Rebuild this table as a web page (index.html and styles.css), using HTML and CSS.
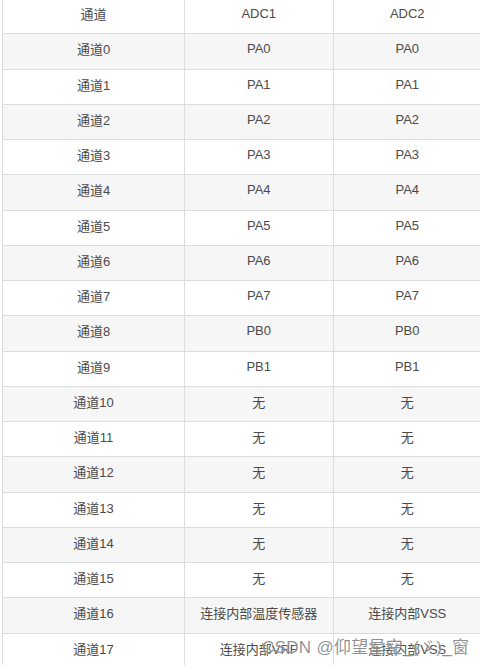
FILE: index.html
```html
<!DOCTYPE html>
<html lang="zh">
<head>
<meta charset="utf-8">
<title>ADC通道</title>
<link rel="stylesheet" href="styles.css">
</head>
<body>
<div class="wrap">
<table class="tbl">
<colgroup><col class="c1"><col class="c2"><col class="c3"></colgroup>
<thead>
<tr><th>通道</th><th>ADC1</th><th>ADC2</th></tr>
</thead>
<tbody>
<tr><td>通道0</td><td>PA0</td><td>PA0</td></tr>
<tr><td>通道1</td><td>PA1</td><td>PA1</td></tr>
<tr><td>通道2</td><td>PA2</td><td>PA2</td></tr>
<tr><td>通道3</td><td>PA3</td><td>PA3</td></tr>
<tr><td>通道4</td><td>PA4</td><td>PA4</td></tr>
<tr><td>通道5</td><td>PA5</td><td>PA5</td></tr>
<tr><td>通道6</td><td>PA6</td><td>PA6</td></tr>
<tr><td>通道7</td><td>PA7</td><td>PA7</td></tr>
<tr><td>通道8</td><td>PB0</td><td>PB0</td></tr>
<tr><td>通道9</td><td>PB1</td><td>PB1</td></tr>
<tr><td>通道10</td><td>无</td><td>无</td></tr>
<tr><td>通道11</td><td>无</td><td>无</td></tr>
<tr><td>通道12</td><td>无</td><td>无</td></tr>
<tr><td>通道13</td><td>无</td><td>无</td></tr>
<tr><td>通道14</td><td>无</td><td>无</td></tr>
<tr><td>通道15</td><td>无</td><td>无</td></tr>
<tr><td>通道16</td><td>连接内部温度传感器</td><td>连接内部VSS</td></tr>
<tr><td>通道17</td><td>连接内部VRF</td><td>连接内部VSS</td></tr>
</tbody>
</table>
<div class="watermark">CSDN @仰望星空_(ゞ)_窗</div>
</div>
</body>
</html>
```

FILE: styles.css
```css
html, body {
  margin: 0;
  padding: 0;
  background: #fff;
  overflow: hidden;
}
.wrap {
  position: relative;
  width: 480px;
  height: 665px;
  overflow: hidden;
}
.tbl {
  border-collapse: collapse;
  table-layout: fixed;
  width: 479px;
  margin: -2px 0 0 2px;
  font-family: "Liberation Sans", "Noto Sans CJK SC", sans-serif;
  font-size: 13px;
  color: #4a4a4a;
}
.c1 { width: 182px; }
.c2 { width: 148.5px; }
.c3 { width: 148.5px; }
.tbl th, .tbl td {
  border: 1px solid #dcdcdc;
  height: 35.25px;
  padding: 0 4px 5px;
  text-align: center;
  font-weight: normal;
  box-sizing: border-box;
}
.tbl tr {
  height: 35.25px;
}
.tbl tbody tr:nth-child(odd) {
  background: #f6f6f6;
}
.watermark {
  position: absolute;
  left: 262px;
  top: 633px;
  font-family: "Liberation Sans", "Noto Sans CJK SC", sans-serif;
  font-size: 17px;
  letter-spacing: 0.3px;
  color: rgba(115, 115, 115, 0.78);
  text-shadow: 0 0 2px rgba(255, 255, 255, 0.9);
  white-space: nowrap;
}
```
